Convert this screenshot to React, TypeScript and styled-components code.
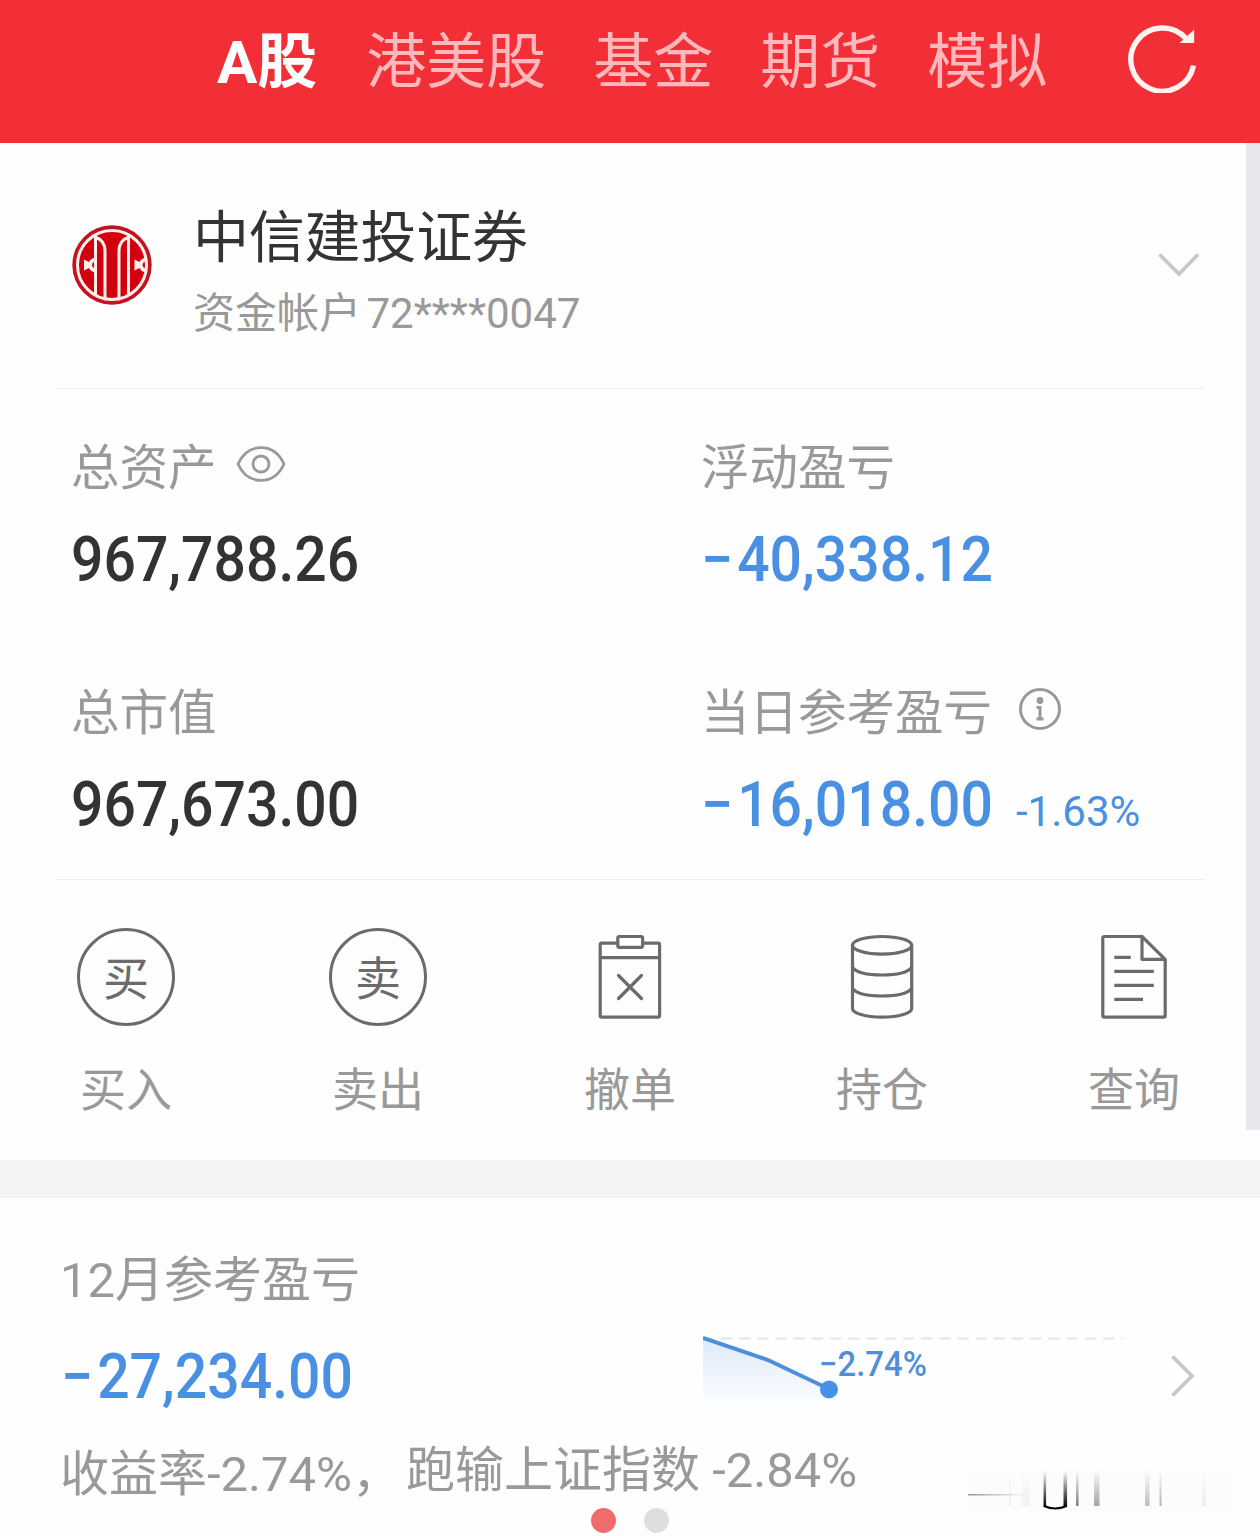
import type { ReactNode } from "react";
import styled, { createGlobalStyle } from "styled-components";

const BLUE = "#4a90e2";

const tabs = ["A股", "港美股", "基金", "期货", "模拟"];

type StatItem = {
  label: string;
  value: string;
  icon?: ReactNode;
  rate?: string;
};

const stats: StatItem[] = [
  { label: "总资产", value: "967,788.26", icon: <EyeIcon /> },
  { label: "浮动盈亏", value: "−40,338.12" },
  { label: "总市值", value: "967,673.00" },
  { label: "当日参考盈亏", value: "−16,018.00", icon: <InfoIcon />, rate: "-1.63%" },
];

const actions = [
  { label: "买入", icon: <CharIcon char="买" /> },
  { label: "卖出", icon: <CharIcon char="卖" /> },
  { label: "撤单", icon: <ClipboardIcon /> },
  { label: "持仓", icon: <StackIcon /> },
  { label: "查询", icon: <DocumentIcon /> },
];

export default function App() {
  return (
    <Page>
      <GlobalStyle />
      <TopBar>
        <Tabs>
          {tabs.map((tab, i) => (
            <Tab key={tab} $active={i === 0}>{tab}</Tab>
          ))}
        </Tabs>
        <RefreshIcon />
      </TopBar>

      <Carousel>
        <Card>
          <Account>
            <BrokerLogo />
            <AccountText>
              <BrokerName>中信建投证券</BrokerName>
              <AccountNo>资金帐户 72****0047</AccountNo>
            </AccountText>
            <ChevronDown />
          </Account>
          <Stats>
            {stats.map((s) => (
              <div key={s.label}>
                <StatLabel>
                  <span>{s.label}</span>
                  {s.icon}
                </StatLabel>
                <StatRow>
                  <Money value={s.value} />
                  {s.rate && <Rate>{s.rate}</Rate>}
                </StatRow>
              </div>
            ))}
          </Stats>
          <Actions>
            {actions.map((a) => (
              <Action key={a.label}>
                {a.icon}
                <ActionLabel>{a.label}</ActionLabel>
              </Action>
            ))}
          </Actions>
        </Card>
        <NextCard />
      </Carousel>

      <Report>
        <ReportTitle>12月参考盈亏</ReportTitle>
        <ReportRow>
          <ReportAmount><Money value="−27,234.00" /></ReportAmount>
          <TrendChart />
          <ChevronRight />
        </ReportRow>
        <Summary>
          <SummaryRate>收益率-2.74%，</SummaryRate>
          <span>跑输上证指数 -2.84%</span>
        </Summary>
        <Dots>
          <Dot $active />
          <Dot />
        </Dots>
        <Smudge />
      </Report>
    </Page>
  );
}

function Money({ value }: { value: string }) {
  const loss = value.startsWith("−");
  return (
    <Amount $loss={loss}>
      {loss && <Sign>−</Sign>}
      {loss ? value.slice(1) : value}
    </Amount>
  );
}

function RefreshIcon() {
  return (
    <svg width="72" height="72" viewBox="0 0 72 72">
      <path d="M58 17.5A31.6 31.6 0 1 0 65.5 44.5" fill="none" stroke="#fff3f0" strokeWidth="5.4" />
      <path d="M66.2 8.5V22H51.5Z" fill="#fff3f0" />
    </svg>
  );
}

function BrokerLogo() {
  const mark = "M23 32.5Q18.5 33.5 17 37L12 34.5V45.5L17 43Q18.5 46.5 23 47.5V44Q20 42.5 20 40T23 36Z";
  return (
    <svg width="80" height="80" viewBox="0 0 80 80">
      <circle cx="40" cy="40" r="39.7" fill="#c5121e" />
      <circle cx="40" cy="40" r="34.5" fill="#d2000f" stroke="#fff0ee" strokeWidth="3" />
      <g fill="none" stroke="#fff0ee" strokeWidth="3">
        <path d="M23.5 11V69M56.5 11V69" />
        <path d="M24 12.5C30 14.5 33 19 33 26V73M56 12.5C50 14.5 47 19 47 26V73" />
      </g>
      <path d={mark} fill="#fff0ee" />
      <path d={mark} transform="translate(50.5 0)" fill="#fff0ee" />
    </svg>
  );
}

function ChevronDown() {
  return (
    <svg width="44" height="26" viewBox="0 0 44 26" fill="none" stroke="#c8c8c8" strokeWidth="3.8">
      <path d="M2.5 2.5L22 22L41 2.5" />
    </svg>
  );
}

function ChevronRight() {
  return (
    <svg width="26" height="52" viewBox="0 0 26 52" fill="none" stroke="#c8c8c8" strokeWidth="3.8">
      <path d="M2.5 10.5L22 30L2.5 49.5" />
    </svg>
  );
}

function EyeIcon() {
  return (
    <EyeSvg viewBox="0 0 50 38">
      <path d="M2 19C7 8 15 2.6 25 2.6S43 8 48 19C43 30 35 35.4 25 35.4S7 30 2 19Z" />
      <circle cx="25" cy="19" r="8" />
    </EyeSvg>
  );
}

function InfoIcon() {
  return (
    <InfoSvg viewBox="0 0 44 44">
      <circle cx="22" cy="22" r="19.5" />
      <circle cx="22" cy="13.5" r="3.4" fill="#999" stroke="none" />
      <path d="M18.5 20.5H22V32M18.5 32H25.5" />
    </InfoSvg>
  );
}

function CharIcon({ char }: { char: string }) {
  return <Round>{char}</Round>;
}

function ClipboardIcon() {
  return (
    <ActionSvg viewBox="0 0 100 100">
      <rect x="20.2" y="16.2" width="59.4" height="74" rx="1.5" />
      <path d="M20.2 30.7H79.6M38.5 48.5L61.5 71.5M61.5 48.5L38.5 71.5" />
      <rect x="37.8" y="9.5" width="24.8" height="10.8" rx="1.5" fill="#fff" />
    </ActionSvg>
  );
}

function StackIcon() {
  return (
    <ActionSvg viewBox="0 0 100 100">
      <ellipse cx="50.1" cy="18.3" rx="29.6" ry="8.8" />
      <path d="M20.5 18.3V81.5C20.5 86 33 90.2 50.1 90.2S79.7 86 79.7 81.5V18.3" />
      <path d="M20.5 40.5C24 45 35 48 50.1 48S76 45 79.7 40.5M20.5 61.5C24 66 35 69 50.1 69S76 66 79.7 61.5" />
    </ActionSvg>
  );
}

function DocumentIcon() {
  return (
    <ActionSvg viewBox="0 0 100 100">
      <path d="M58 9.5H20.3Q18.8 9.5 18.8 11V88.7Q18.8 90.2 20.3 90.2H79.7Q81.2 90.2 81.2 88.7V32.3L58 9.5V32.3H81.2" strokeLinejoin="round" />
      <path d="M30.3 30.3H46.7M30.3 44.3H69.8M30.3 58.3H69.8M30.3 72.3H59" strokeLinecap="butt" />
    </ActionSvg>
  );
}

function TrendChart() {
  return (
    <Chart viewBox="0 0 424 84">
      <defs>
        <linearGradient id="area" x1="0" y1="0" x2="0" y2="1">
          <stop offset="0" stopColor={BLUE} stopOpacity="0.18" />
          <stop offset="1" stopColor={BLUE} stopOpacity="0" />
        </linearGradient>
      </defs>
      <path d="M18 8.5H420" stroke="#e4e4e4" strokeWidth="2" strokeDasharray="11 7.2" />
      <path d="M0 8L65 30L126 59V78H0Z" fill="url(#area)" />
      <path d="M0 8L65 30L126 59" fill="none" stroke="#4c8fdc" strokeWidth="4" />
      <circle cx="126" cy="59.5" r="9" fill="#4790e8" />
      <ChartLabel x="116" y="46" textLength="108" lengthAdjust="spacingAndGlyphs">−2.74%</ChartLabel>
    </Chart>
  );
}

// faded stamp in the bottom right corner
function Smudge() {
  return (
    <SmudgeSvg viewBox="0 0 264 40">
      <defs>
        <linearGradient id="fadeY" x1="0" y1="0" x2="0" y2="1">
          <stop offset="0" stopColor="#000" stopOpacity="0" />
          <stop offset="1" stopColor="#000" />
        </linearGradient>
        <linearGradient id="fadeX" x1="0" y1="0" x2="1" y2="0">
          <stop offset="0" stopColor="#000" stopOpacity="0.4" />
          <stop offset="1" stopColor="#000" stopOpacity="0" />
        </linearGradient>
      </defs>
      <rect width="264" height="40" fill="#fcfcfc" />
      <rect y="23" width="60" height="1.5" fill="url(#fadeX)" />
      <g fill="url(#fadeY)">
        <rect x="75.5" width="2.6" height="36" />
        <rect x="95.5" width="3.6" height="36" />
        <rect x="108" width="2.6" height="35" opacity="0.5" />
        <rect x="126" width="5.5" height="35" opacity="0.35" />
        <rect x="177" width="4.5" height="35" opacity="0.25" />
        <rect x="191.5" width="2" height="35" opacity="0.3" />
        <rect x="41" width="2" height="35" opacity="0.05" />
        <rect x="54" width="8" height="35" opacity="0.04" />
        <rect x="234" width="4" height="35" opacity="0.06" />
      </g>
      <path d="M76 35Q87 40 98.5 35" fill="none" stroke="#000" strokeWidth="2" />
    </SmudgeSvg>
  );
}

const GlobalStyle = createGlobalStyle`
  body {
    margin: 0;
    background: #fefefe;
  }
  svg { flex: none; display: block; }
`;

const Page = styled.div`
  width: 1260px;
  height: 1536px;
  overflow: hidden;
  display: flex;
  flex-direction: column;
  color: #999;
  font-family: Roboto, "Noto Sans CJK SC", sans-serif;
`;

const TopBar = styled.header`
  box-sizing: border-box;
  height: 142.5px;
  flex: none;
  display: flex;
  justify-content: space-between;
  align-items: flex-start;
  padding: 20.5px 60.5px 0 217px;
  background: #f22f37;
`;

const Tabs = styled.nav`
  display: flex;
  gap: 47px;
  padding-top: 11.5px;
`;

const Tab = styled.span<{ $active?: boolean }>`
  margin-right: ${(p) => (p.$active ? "2px" : 0)};
  font-size: 60px;
  line-height: 62px;
  font-weight: ${(p) => (p.$active ? 700 : 400)};
  color: ${(p) => (p.$active ? "#fff" : "#ffb9bc")};
`;

const Carousel = styled.div`
  display: flex;
  align-items: flex-start;
  flex: none;
  height: 1017.5px;
`;

const Card = styled.section`
  width: 1246px;
  flex: none;
`;

const NextCard = styled.div`
  width: 14px;
  height: 987.5px;
  background: #e8e8ec;
`;

const Account = styled.div`
  box-sizing: border-box;
  height: 246px;
  display: flex;
  align-items: center;
  margin: 0 42px 0 56px;
  padding: 0 3px 0 16px;
  border-bottom: 1.5px solid #eee;
`;

const AccountText = styled.div`
  flex: 1;
  margin-left: 41px;
  padding-top: 14px;
`;

const BrokerName = styled.div`
  font-size: 56px;
  line-height: 76px;
  letter-spacing: -0.2px;
  color: #333;
`;

const AccountNo = styled.div`
  font-size: 42px;
  line-height: 60px;
  margin-top: 8px;
  word-spacing: -5px;
`;

const Stats = styled.div`
  display: grid;
  grid-template-columns: 630px 1fr;
  row-gap: 94px;
  margin: 0 42px 0 56px;
  padding: 50px 0 44px 15px;
  border-bottom: 1.5px solid #eee;
`;

const StatLabel = styled.div`
  display: flex;
  align-items: flex-start;
  height: 60px;
  font-size: 48.5px;
  line-height: 60px;
`;

const EyeSvg = styled.svg`
  width: 50px;
  height: 38px;
  margin: 6px 0 0 19px;
  fill: none;
  stroke: #999;
  stroke-width: 2.8;
  stroke-linejoin: round;
`;

const InfoSvg = styled.svg`
  width: 44px;
  height: 44px;
  margin: 3px 0 0 26px;
  fill: none;
  stroke: #999;
  stroke-width: 3;
`;

const StatRow = styled.div`
  display: flex;
  align-items: baseline;
  height: 60px;
  margin-top: 31px;
`;

const Amount = styled.span<{ $loss?: boolean }>`
  display: inline-block;
  width: 310px;
  font-size: 63px;
  line-height: 60px;
  font-weight: 500;
  white-space: nowrap;
  color: ${(p) => (p.$loss ? BLUE : "#333")};
  transform: scaleX(0.906);
  transform-origin: left;
`;

const Sign = styled.span`
  margin-right: 4.5px;
`;

const Rate = styled.span`
  margin-left: 5px;
  font-size: 42px;
  color: ${BLUE};
`;

const Actions = styled.div`
  display: flex;
  justify-content: space-between;
  padding: 47px 62px 0 76px;
`;

const Action = styled.div`
  width: 100px;
  display: flex;
  flex-direction: column;
  align-items: center;
`;

const ActionSvg = styled.svg`
  width: 100px;
  height: 100px;
  fill: none;
  stroke: #6b6b6b;
  stroke-width: 3.2;
  stroke-linecap: round;
`;

const Round = styled.div`
  box-sizing: border-box;
  width: 98px;
  height: 98px;
  margin: 1px;
  border: 3px solid #6b6b6b;
  border-radius: 50%;
  font-size: 46px;
  line-height: 96px;
  text-align: center;
  color: #6b6b6b;
`;

const ActionLabel = styled.div`
  margin-top: 33px;
  font-size: 46px;
  line-height: 60px;
  white-space: nowrap;
`;

const Report = styled.section`
  position: relative;
  flex: 1;
  padding: 53px 62px 0;
  border-top: 38.5px solid #f4f4f4;
`;

const ReportTitle = styled.div`
  margin-left: -2px;
  font-size: 49px;
  line-height: 60px;
`;

const ReportRow = styled.div`
  display: flex;
  align-items: center;
  height: 84px;
  margin-top: 19px;
`;

const ReportAmount = styled.div`
  width: 642px;
  margin-left: -1px;
  padding-top: 9px;
`;

const Chart = styled.svg`
  width: 424px;
  height: 84px;
  margin-right: 43px;
`;

const ChartLabel = styled.text`
  font-size: 35px;
  font-weight: 500;
  fill: #4f8fd6;
`;

const Summary = styled.div`
  display: flex;
  margin: 27px 0 0 -2px;
  font-size: 49px;
  line-height: 60px;
  white-space: nowrap;
`;

const SummaryRate = styled.span`
  width: 346px;
  padding-top: 4px;
`;

const Dots = styled.div`
  display: flex;
  gap: 28px;
  margin-top: 3px;
  padding-left: 529px;
`;

const Dot = styled.i<{ $active?: boolean }>`
  width: 25px;
  height: 25px;
  border-radius: 50%;
  background: ${(p) => (p.$active ? "#ef6c6c" : "#dedede")};
`;

const SmudgeSvg = styled.svg`
  position: absolute;
  right: 28px;
  bottom: 25px;
  width: 264px;
  height: 40px;
`;
